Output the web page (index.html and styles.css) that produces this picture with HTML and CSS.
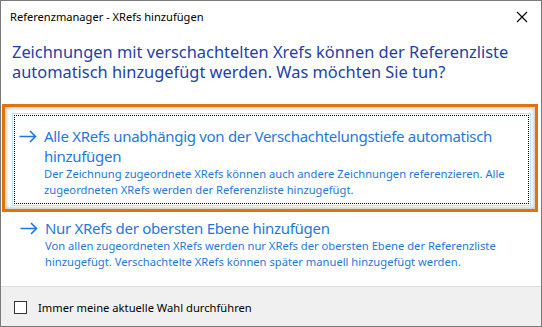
FILE: index.html
```html
<!DOCTYPE html>
<html lang="de">
<head>
    <meta charset="UTF-8">
    <title>Referenzmanager - XRefs hinzufügen</title>
    <link rel="stylesheet" href="styles.css">
</head>
<body>
    <div class="dialog">
        <div class="titlebar">
            <span class="title">Referenzmanager - XRefs hinzufügen</span>
            <svg class="close" width="12" height="12" viewBox="0 0 12 12">
                <path d="M1 1 L11 11 M11 1 L1 11" stroke="#000" stroke-width="1.1" fill="none"/>
            </svg>
        </div>
        <div class="content">
            <p class="instruction">Zeichnungen mit verschachtelten Xrefs können der Referenzliste automatisch hinzugefügt werden. Was möchten Sie tun?</p>

            <!-- hervorgehobene Option -->
            <div class="highlight">
                <div class="cmd cmd-focus">
                    <div class="cmd-inner">
                        <svg class="arrow" width="18" height="13" viewBox="0 0 18 13">
                            <path d="M0.5 6.5 H16.5 M11 1 L16.5 6.5 L11 12" stroke="#1f78e0" stroke-width="1.6" fill="none"/>
                        </svg>
                        <div class="cmd-text">
                            <div class="cmd-title">Alle XRefs unabhängig von der Verschachtelungstiefe automatisch hinzufügen</div>
                            <div class="cmd-desc">Der Zeichnung zugeordnete XRefs können auch andere Zeichnungen referenzieren. Alle zugeordneten XRefs werden der Referenzliste hinzugefügt.</div>
                        </div>
                    </div>
                </div>
            </div>

            <div class="cmd cmd-plain">
                <div class="cmd-inner">
                    <svg class="arrow" width="18" height="13" viewBox="0 0 18 13">
                        <path d="M0.5 6.5 H16.5 M11 1 L16.5 6.5 L11 12" stroke="#1f78e0" stroke-width="1.6" fill="none"/>
                    </svg>
                    <div class="cmd-text">
                        <div class="cmd-title">Nur XRefs der obersten Ebene hinzufügen</div>
                        <div class="cmd-desc">Von allen zugeordneten XRefs werden nur XRefs der obersten Ebene der Referenzliste hinzugefügt. Verschachtelte XRefs können später manuell hinzugefügt werden.</div>
                    </div>
                </div>
            </div>
        </div>
        <div class="footer">
            <span class="checkbox"></span>
            <span class="footer-label">Immer meine aktuelle Wahl durchführen</span>
        </div>
    </div>
</body>
</html>
```

FILE: styles.css
```css
* {
    margin: 0;
    padding: 0;
    box-sizing: border-box;
}

body {
    font-family: "Noto Sans", "Open Sans", sans-serif;
    background: #ffffff;
}

.dialog {
    width: 542px;
    height: 327px;
    border: 1px solid #7a7a7a;
    background: #ffffff;
    display: flex;
    flex-direction: column;
}

.titlebar {
    height: 29px;
    display: flex;
    align-items: center;
    justify-content: space-between;
    padding: 2px 13px 0 9px;
}
.title {
    font-size: 11.1px;
    color: #000000;
}

.content {
    flex-grow: 1;
    padding: 0 3px 0 1px;
}

.instruction {
    font-size: 16.4px;
    line-height: 20px;
    color: #1e3fa8;
    padding: 12px 8px 0 10px;
    height: 74px;
}

.highlight {
    border: 3px solid #e2720e;
    padding: 6px 4px 3px 7px;
    box-shadow: inset 0 0 3px 2px #d2d2d2;
}

.cmd {
    border: 1px solid transparent;
}
.cmd-focus {
    border-color: #c4e2f6;
    padding: 1px;
}
.cmd-focus .cmd-inner {
    border: 1px dotted #000000;
    padding: 10px 6px 5px 3px;
}
.cmd-inner {
    display: flex;
}
.cmd-plain {
    padding: 5px 8px 0 16px;
}

.arrow {
    flex-shrink: 0;
    margin: 4px 7px 0 1px;
}

.cmd-title {
    font-size: 15px;
    letter-spacing: -0.3px;
    line-height: 20px;
    color: #1f78e0;
}
.cmd-desc {
    font-size: 11.2px;
    line-height: 16px;
    color: #1f78e0;
}

.footer {
    height: 40px;
    background: #f0f0f0;
    border-top: 1px solid #dfdfdf;
    display: flex;
    align-items: center;
    padding: 2px 0 0 13px;
}
.checkbox {
    width: 13px;
    height: 13px;
    border: 1px solid #333333;
    background: #ffffff;
    margin-right: 11px;
}
.footer-label {
    font-size: 11.2px;
    color: #000000;
}
```
